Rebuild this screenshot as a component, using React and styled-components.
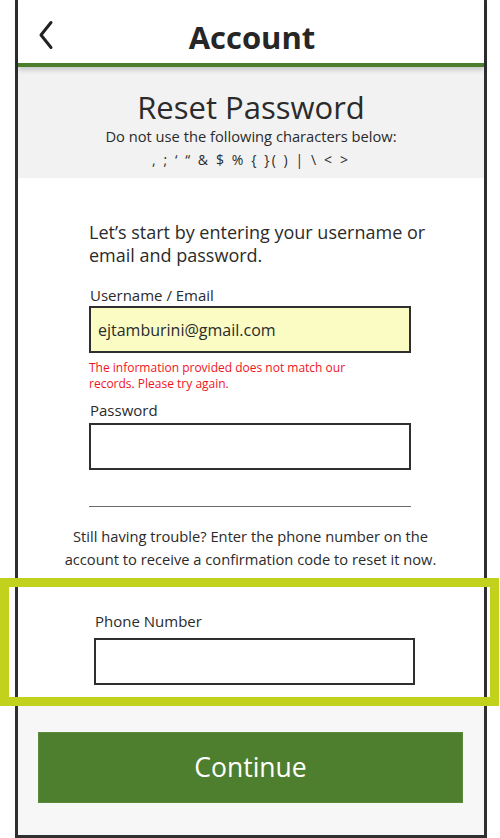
import styled, { createGlobalStyle } from 'styled-components';

const GlobalStyle = createGlobalStyle`
	html,
	body {
		margin: 0;
		padding: 0;
		background: #ffffff;
	}

	body {
		font-family: 'Open Sans', 'Noto Sans', sans-serif;
		color: #2b2b2b;
	}
`;

const Frame = styled.div`
	box-sizing: border-box;
	width: 472px;
	height: 838px;
	margin-left: 15px;
	border: 3px solid #2f2f2f;
	border-top: none;
	background: #f7f7f7;
	display: flex;
	flex-direction: column;
`;

const Header = styled.header`
	position: relative;
	box-sizing: border-box;
	height: 67px;
	padding-top: 10px;
	flex-shrink: 0;
	display: flex;
	align-items: center;
	justify-content: center;
	background: #ffffff;
	border-bottom: 4px solid #4a7d2c;
	box-shadow: 0 3px 5px rgba(0, 0, 0, 0.18);
	z-index: 1;
`;

const BackButton = styled.button`
	position: absolute;
	left: 20px;
	top: 20px;
	width: 20px;
	height: 30px;
	padding: 0;
	border: none;
	background: transparent;
	cursor: pointer;
`;

const Title = styled.h1`
	margin: 0;
	font-size: 31px;
	line-height: 40px;
	font-weight: 700;
	color: #262626;
	transform: translateX(1px);
`;

const Intro = styled.section`
	background: #f2f2f2;
	padding: 22px 0 8px;
	text-align: center;
	flex-shrink: 0;
`;

const IntroTitle = styled.h2`
	margin: 0;
	font-size: 31px;
	font-weight: 400;
	line-height: 36px;
	color: #2b2b2b;
`;

const IntroNote = styled.p`
	margin: 1px 0 0;
	font-size: 14.7px;
	line-height: 20px;
	color: #2b2b2b;
`;

const Forbidden = styled.p`
	margin: 4px 0 0;
	font-size: 14px;
	line-height: 20px;
	letter-spacing: 2.1px;
	word-spacing: 0;
	color: #2b2b2b;
`;

const Body = styled.section`
	background: #ffffff;
	padding: 43px 72px 0 71px;
	flex-shrink: 0;
	height: 400px;
	box-sizing: border-box;
`;

const Lead = styled.p`
	margin: 0 -30px 18px 0;
	font-size: 18px;
	line-height: 23px;
	color: #2b2b2b;
`;

const Field = styled.div`
	display: flex;
	flex-direction: column;
	margin-top: ${(p) => p.$top || 0}px;
`;

const Label = styled.label`
	font-size: 15px;
	line-height: 20px;
	margin-bottom: ${(p) => p.$gap ?? 1}px;
	margin-left: 1px;
	color: #2b2b2b;
`;

const Input = styled.input`
	box-sizing: border-box;
	width: ${(p) => p.$width || 322}px;
	height: 47px;
	margin: 0;
	padding: 0 7px;
	border: 2px solid #2f2f2f;
	background: ${(p) => (p.$filled ? '#fafcc4' : '#ffffff')};
	font-family: 'Open Sans', sans-serif;
	font-size: 16px;
	color: #2b2b2b;
	outline: none;
`;

const ErrorText = styled.p`
	margin: 7px 0 0;
	width: 270px;
	font-size: 12px;
	line-height: 16px;
	color: #f0141e;
`;

const Divider = styled.hr`
	margin: 36px 0 0;
	width: 322px;
	border: none;
	border-top: 1px solid #6a6a6a;
`;

const Hint = styled.p`
	margin: 18px -30px 0;
	text-align: center;
	font-size: 14.7px;
	line-height: 23px;
	color: #2b2b2b;
`;

const PhoneSection = styled.section`
	position: relative;
	background: #ffffff;
	height: 128px;
	box-sizing: border-box;
	padding: 33px 0 0 76px;
	flex-shrink: 0;
`;

const Highlight = styled.div`
	position: absolute;
	top: 0;
	bottom: 0;
	left: -18px;
	right: -15px;
	border: 9px solid #c2d11c;
	pointer-events: none;
`;

const Footer = styled.footer`
	flex: 1;
	padding: 26px 21px 0 20px;
	background: #f7f7f7;
`;

const ContinueButton = styled.button`
	display: block;
	width: 425px;
	height: 71px;
	padding: 0 0 2px;
	border: 1px solid #5a8a3a;
	background: #4e7f2e;
	color: #ffffff;
	font-family: 'Open Sans', sans-serif;
	font-size: 26.5px;
	font-weight: 400;
	cursor: pointer;
`;

const Chevron = () => (
	<svg width='20' height='30' viewBox='0 0 20 30' fill='none'>
		<path d='M13 2.5 L3 15 L13 27.5' stroke='#222' strokeWidth='3' strokeLinecap='round' strokeLinejoin='round' />
	</svg>
);

export default function App() {
	return (
		<>
			<GlobalStyle />
			<Frame>
				<Header>
					<BackButton aria-label='Back'>
						<Chevron />
					</BackButton>
					<Title>Account</Title>
				</Header>

				<Intro>
					<IntroTitle>Reset Password</IntroTitle>
					<IntroNote>Do not use the following characters below:</IntroNote>
					<Forbidden>, ; ‘ “ &amp; $ % {'{'} {'}'}( ) | \ &lt; &gt;</Forbidden>
				</Intro>

				<Body>
					<Lead>Let’s start by entering your username or email and password.</Lead>
					<Field>
						<Label>Username / Email</Label>
						<Input $filled defaultValue='ejtamburini@gmail.com' />
						<ErrorText>The information provided does not match our records. Please try again.</ErrorText>
					</Field>
					<Field $top={8}>
						<Label $gap={3}>Password</Label>
						<Input type='password' />
					</Field>
					<Divider />
					<Hint>
						Still having trouble? Enter the phone number on the account to receive a confirmation code to reset it now.
					</Hint>
				</Body>

				<PhoneSection>
					<Field>
						<Label $gap={7}>Phone Number</Label>
						<Input $width={321} type='tel' />
					</Field>
					<Highlight />
				</PhoneSection>

				<Footer>
					<ContinueButton>Continue</ContinueButton>
				</Footer>
			</Frame>
		</>
	);
}
